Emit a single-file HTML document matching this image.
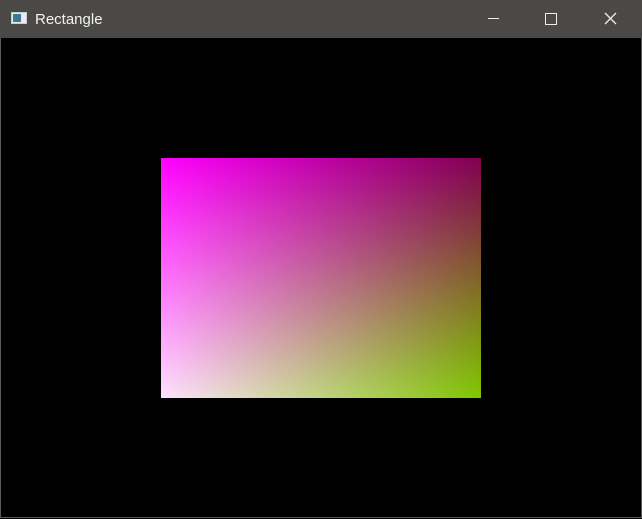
<!DOCTYPE html>
<html><head><meta charset="utf-8"><style>
html,body{margin:0;padding:0;width:642px;height:519px;overflow:hidden;background:#000;}
.win{position:absolute;left:0;top:0;width:640px;height:517px;border:1px solid #5a5a5a;border-top:none;background:#000;}
.tb{position:absolute;left:0;top:0;width:642px;height:38px;background:#4a4946;}
.title{position:absolute;left:35px;top:11px;color:#f2f2f2;font:15px "Liberation Sans",sans-serif;}
.ic{position:absolute;left:11px;top:12px;width:16px;height:12px;background:#e8ecee;border:1px solid #ccc;box-sizing:border-box;}
.ic i{position:absolute;left:1px;top:1px;width:8px;height:8px;background:linear-gradient(135deg,#2a8a8a,#4a6a9a);}
.rect{position:absolute;left:161px;top:158px;width:320px;height:240px;background:linear-gradient(to right,#ffe0ff,#80c800);}
.rect .t{position:absolute;inset:0;background:linear-gradient(to right,#ff00ff,#800050);-webkit-mask-image:linear-gradient(to bottom,#000,transparent);mask-image:linear-gradient(to bottom,#000,transparent);}
</style></head><body>
<div class="win"></div>
<div class="tb">
<div class="ic"><i></i></div>
<div class="title">Rectangle</div>
<svg width="642" height="38" style="position:absolute;left:0;top:0">
<line x1="488" y1="18.5" x2="499" y2="18.5" stroke="#eee" stroke-width="1"/>
<rect x="545.5" y="13.5" width="11" height="11" fill="none" stroke="#eee" stroke-width="1"/>
<path d="M605 13 L616 24 M616 13 L605 24" stroke="#eee" stroke-width="1.3"/>
</svg>
</div>
<div class="rect"><div class="t"></div></div>
</body></html>
